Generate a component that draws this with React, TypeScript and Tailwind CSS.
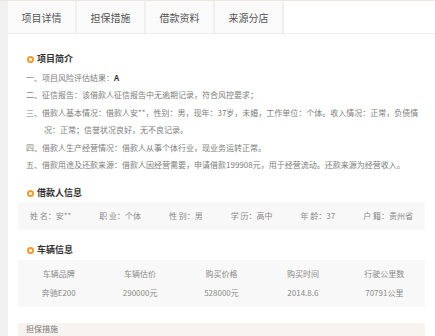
import React from "react";

const font = { fontFamily: '"Noto Sans CJK SC", "Noto Sans", sans-serif' };

function Heading({ title }: { title: string }) {
  return (
    <div className="flex items-center h-[14px] pl-[9px] gap-[3px]">
      <span className="w-[7px] h-[7px] rounded-full border-[2px] border-[#f39a2b] bg-white"></span>
      <span className="text-[9px] font-bold text-[#333] leading-[14px]">{title}</span>
    </div>
  );
}

export default function App() {
  const tabs = ["项目详情", "担保措施", "借款资料", "来源分店"];
  const lines: React.ReactNode[] = [
    <>一、项目风险评估结果：<b className="text-[#333]">A</b></>,
    <>二、征信报告：该借款人征信报告中无逾期记录，符合风控要求；</>,
    <>三、借款人基本情况：借款人安**，性别：男，现年：37岁，未婚，工作单位：个体。收入情况：正常，负债情</>,
    <span className="pl-[18px]">况：正常；信誉状况良好，无不良记录。</span>,
    <>四、借款人生产经营情况：借款人从事个体行业，现业务运转正常。</>,
    <>五、借款用途及还款来源：借款人因经营需要，申请借款199908元，用于经营流动。还款来源为经营收入。</>,
  ];
  const info = ["姓 名：安**", "职 业：个体", "性 别：男", "学 历：高中", "年 龄：37", "户 籍：贵州省"];
  const cols = [
    ["车辆品牌", "奔驰E200"],
    ["车辆估价", "290000元"],
    ["购买价格", "528000元"],
    ["购买时间", "2014.8.6"],
    ["行驶公里数", "70791公里"],
  ];
  return (
    <div className="w-[435px] h-[336px] overflow-hidden bg-white flex flex-col" style={font}>
      <div className="h-[3px] bg-[#f4f1ec] border-b border-[#ebe6df]"></div>
      <div className="flex flex-1">
        <div className="w-[8px] bg-[#f1f1f1]"></div>
        <div className="flex-1 flex flex-col">
          <div className="flex h-[33px] border-b border-[#ececec]">
            {tabs.map((t) => (
              <div
                key={t}
                className="w-[69px] flex items-center justify-center bg-[#fafafa] border-r-[2px] border-[#efefef] text-[10px] text-[#555]"
              >
                {t}
              </div>
            ))}
          </div>
          <div className="px-[10px] flex flex-col">
            <div className="mt-[18px]">
              <Heading title="项目简介" />
            </div>
            <div className="mt-[3px] pl-[8px] flex flex-col text-[8px] text-[#7d7d7d]">
              {lines.map((l, i) => (
                <div key={i} className="h-[17.4px] leading-[17.4px] whitespace-nowrap">
                  {l}
                </div>
              ))}
            </div>
            <div className="mt-[13px]">
              <Heading title="借款人信息" />
            </div>
            <div className="mt-[2px] h-[28px] bg-[#f8f8f8] flex items-center justify-between px-[12px] text-[8px] text-[#8a8a8a]">
              {info.map((s) => (
                <span key={s} className="whitespace-pre">{s}</span>
              ))}
            </div>
            <div className="mt-[13px]">
              <Heading title="车辆信息" />
            </div>
            <div className="mt-[3px] bg-[#f8f8f8] pt-[3.5px] pb-[5.5px] grid grid-cols-5 text-[8px] text-[#8a8a8a]">
              {cols.map(([h, v]) => (
                <div key={h} className="flex flex-col items-center">
                  <div className="h-[19px] leading-[19px]">{h}</div>
                  <div className="h-[19px] leading-[19px]">{v}</div>
                </div>
              ))}
            </div>
            <div className="mt-[16px] h-[30px] bg-[#f7f3ef] pl-[8px] pt-[1px] text-[8px] text-[#777] leading-[10px]">
              担保措施
            </div>
          </div>
        </div>
      </div>
    </div>
  );
}
